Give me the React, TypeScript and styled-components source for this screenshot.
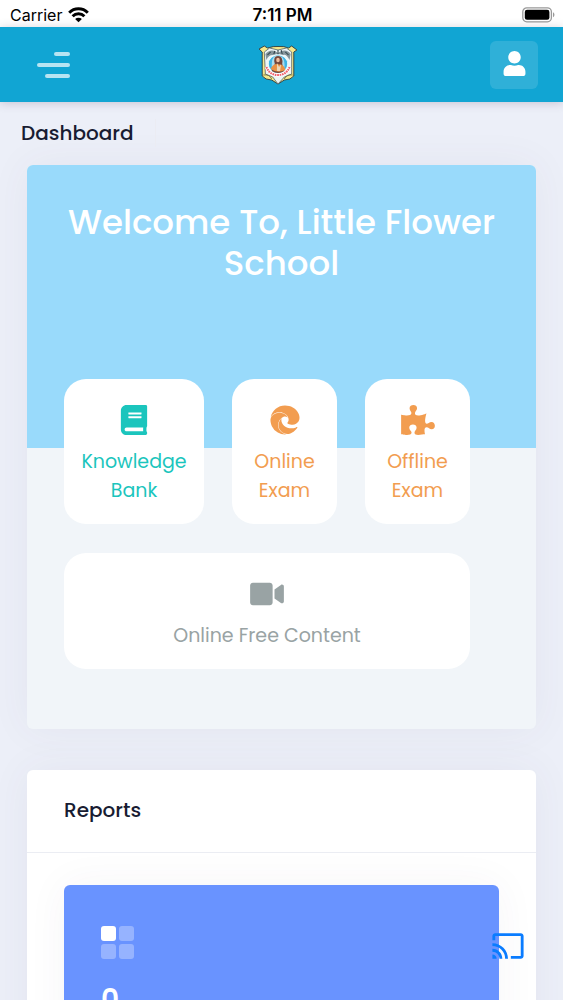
import React from "react";
import styled, { createGlobalStyle } from "styled-components";
import { FaBook, FaEdge, FaPuzzlePiece, FaUser, FaVideo } from "react-icons/fa";
import { MdCast } from "react-icons/md";

const GlobalStyle = createGlobalStyle`
  *, *::before, *::after { box-sizing: border-box; }
  body {
    margin: 0;
    background: #eceff8;
    color: #181c32;
    font-family: Poppins, Inter, "Liberation Sans", sans-serif;
  }
`;

const Screen = styled.div`
  display: flex;
  flex-direction: column;
  height: 100vh;
`;

const StatusBar = styled.div`
  display: grid;
  grid-template-columns: 1fr auto 1fr;
  align-items: center;
  flex: none;
  height: 27px;
  padding: 2px 8px 0 10px;
  background: #fff;
  color: #000;
  font-family: Inter, "Liberation Sans", sans-serif;
  font-size: 16px;
  line-height: 24px;
`;

const Carrier = styled.span`
  display: flex;
  align-items: center;
  gap: 6px;
`;

const Clock = styled.span`
  font-size: 17px;
  font-weight: 600;
`;

const BatterySlot = styled.span`
  display: flex;
  justify-content: flex-end;
`;

const TopBar = styled.header`
  display: flex;
  align-items: center;
  justify-content: space-between;
  flex: none;
  position: relative;
  z-index: 1;
  height: 75px;
  padding: 0 25px 0 37px;
  background: #11a5d3;
  box-shadow: 0 1px 9px rgba(82, 63, 105, 0.25);
`;

const TopSide = styled.div<{ $end?: boolean }>`
  display: flex;
  flex: 1;
  justify-content: ${(p) => (p.$end ? "flex-end" : "flex-start")};
`;

const MenuButton = styled.button`
  display: flex;
  flex-direction: column;
  align-items: flex-end;
  gap: 7px;
  width: 33px;
  padding: 0;
  border: 0;
  background: none;
`;

const MenuLine = styled.span<{ $width: number }>`
  width: ${(p) => p.$width}px;
  height: 4px;
  border-radius: 2px;
  background: #b7e4f2;
`;

const HomeLink = styled.a`
  display: flex;
  margin-right: 20px;
`;

const UserButton = styled.button`
  display: flex;
  align-items: center;
  justify-content: center;
  width: 48px;
  height: 48px;
  padding: 0 0 2px;
  border: 0;
  border-radius: 6px;
  background: rgba(255, 255, 255, 0.13);
  color: #fff;
  font-size: 25px;
`;

const Content = styled.main`
  flex: 1;
  min-height: 0;
  overflow-y: auto;
  scrollbar-width: none;
`;

const PageHead = styled.div`
  display: flex;
  align-items: center;
  gap: 21px;
  height: 63px;
  padding: 0 21px 2px;
`;

const PageTitle = styled.h1`
  margin: 0;
  font-size: 20px;
  font-weight: 500;
  line-height: 28px;
`;

const HeadRule = styled.span`
  width: 1px;
  height: 28px;
  background: #ebecf3;
`;

const Card = styled.section<{ $tone: string }>`
  margin: 0 27px 41px;
  border-radius: 6px;
  background: ${(p) => p.$tone};
  box-shadow: 0 0 42px rgba(82, 63, 105, 0.06);
`;

const Banner = styled.div`
  height: 283px;
  padding: 37px 36px 0;
  border-radius: 6px 6px 0 0;
  background: #99dafb;
`;

const Welcome = styled.h2`
  margin: 0;
  color: #fff;
  font-size: 34px;
  font-weight: 500;
  line-height: 41px;
  text-align: center;
`;

const Tiles = styled.nav`
  display: grid;
  grid-template-columns: 4fr 3fr 3fr;
  gap: 29px 28px;
  position: relative;
  margin: -69px 66px 0 37px;
  padding-bottom: 60px;
`;

const Tile = styled.a<{ $tone: string; $wide?: boolean }>`
  display: flex;
  flex-direction: column;
  align-items: center;
  grid-column: ${(p) => (p.$wide ? "1 / -1" : "auto")};
  gap: 12px;
  padding: 26px 12px 19px;
  border-radius: 22px;
  background: #fff;
  color: ${(p) => p.$tone};
  font-size: 19px;
  line-height: 29px;
  text-align: center;
  text-decoration: none;

  svg {
    width: 34px;
    height: 30px;
  }
`;

const CardHead = styled.header`
  padding: 26px 37px 28px;
  border-bottom: 1px solid #ebedf3;
`;

const CardTitle = styled.h2`
  margin: 0;
  font-size: 20px;
  font-weight: 500;
  line-height: 28px;
`;

const CardBody = styled.div`
  padding: 32px 37px 37px;
`;

const Stat = styled.div`
  padding: 41px 37px;
  border-radius: 6px;
  background: #6993ff;
  box-shadow: 0 0 42px rgba(82, 63, 105, 0.05);
  color: #fff;
`;

const StatIcon = styled.svg`
  display: block;
`;

const StatValue = styled.div`
  margin-top: 20px;
  font-size: 28px;
  font-weight: 600;
  line-height: 42px;
`;

const CastButton = styled.button`
  display: flex;
  position: fixed;
  right: 38px;
  bottom: 37px;
  padding: 0;
  border: 0;
  background: none;
  color: #0a7cff;
  font-size: 34px;
`;

const WifiMark = () => (
  <svg width="21" height="16" viewBox="0 0 21 16" aria-hidden="true">
    <g fill="none" stroke="#000" strokeWidth="3">
      <path d="M1.2 5.7a13.2 13.2 0 0 1 18.6 0" />
      <path d="M4.6 9.2a8.4 8.4 0 0 1 11.8 0" />
    </g>
    <path d="M10.5 15.3 7.1 12a4.9 4.9 0 0 1 6.8 0z" />
  </svg>
);

const BatteryMark = () => (
  <svg width="33" height="16" viewBox="0 0 33 16" aria-hidden="true">
    <rect x="0.8" y="0.8" width="28.6" height="14" rx="4" fill="none" stroke="#999" strokeWidth="1.3" />
    <rect x="2.8" y="2.8" width="24.6" height="10" rx="2.2" />
    <path d="M31 5.3c1.9.8 1.9 4.2 0 5z" fill="#999" />
  </svg>
);

const Crest = () => (
  <svg width="40" height="40" viewBox="0 0 38 40" preserveAspectRatio="none" role="img" aria-label="School crest">
    <path
      d="M1 4l5-3 3 2q6-2 10-1.500Q25 1 29 3l3-2 5 4-3 2v24q-3 4-9 4l-6 4-6-4q-6 0-9-4V7z"
      fill="#f5e88b"
      stroke="#343d3b"
      strokeWidth="0.900"
    />
    <path d="M6 7l5-4 8 2 8-2 5 4v22l-7 3-6 7-5-7-7-3z" fill="#eef6f6" stroke="#58676c" strokeWidth="0.800" />
    <path d="M7 9q4-5 9-3l3 2 3-2q6-2 9 3l-1 6q-3-6-6-5l-5-1-5 1q-4 0-6 5z" fill="#84959b" />
    <path d="M9 10l3-3m3 2 1-3m3 4V5m4 4-1-4m7 5-3-3" stroke="#2f4249" strokeWidth="1" />
    <circle cx="19" cy="19" r="9.300" fill="#3fb5e6" stroke="#e9fbff" strokeWidth="1" />
    <path d="M13 21q0-8 3-10l3-1 4 2q3 5 2 11l-3 4h-8z" fill="#a9dced" />
    <path d="M16 19q-2-8 3-8t4 8l2 7q-6 4-12 0z" fill="#74453a" />
    <ellipse cx="19" cy="15" rx="1.700" ry="2.300" fill="#f1bd9b" />
    <path d="M12 24q2-5 6-5l5 1q3 2 3 5-7 4-14-1z" fill="#e99145" />
    <path d="M18 18l2 4 2-3-1 7h-3z" fill="#eed6b5" />
    <path d="M8 22q3 8 11 8t11-8" fill="none" stroke="#fff" strokeWidth="3.500" />
    <path d="M8 22q3 8 11 8t11-8" fill="none" stroke="#f0606d" strokeWidth="2" strokeDasharray="1.600 0.700" />
    <path d="M5 30q6-1 8 4m20-4q-6-1-8 4" fill="none" stroke="#6b6937" strokeWidth="0.800" />
  </svg>
);

export default function App() {
  return (
    <Screen>
      <GlobalStyle />
      <StatusBar>
        <Carrier>
          Carrier
          <WifiMark />
        </Carrier>
        <Clock>7:11 PM</Clock>
        <BatterySlot>
          <BatteryMark />
        </BatterySlot>
      </StatusBar>

      <TopBar>
        <TopSide>
          <MenuButton aria-label="Menu">
            <MenuLine $width={16} />
            <MenuLine $width={33} />
            <MenuLine $width={25} />
          </MenuButton>
        </TopSide>
        <HomeLink href="#home">
          <Crest />
        </HomeLink>
        <TopSide $end>
          <UserButton aria-label="Profile">
            <FaUser />
          </UserButton>
        </TopSide>
      </TopBar>

      <Content>
        <PageHead>
          <PageTitle>Dashboard</PageTitle>
          <HeadRule />
        </PageHead>

        <Card $tone="#f1f5f9">
          <Banner>
            <Welcome>Welcome To, Little Flower School</Welcome>
          </Banner>
          <Tiles>
            <Tile href="#knowledge-bank" $tone="#1bc5bd">
              <FaBook />
              Knowledge Bank
            </Tile>
            <Tile href="#online-exam" $tone="#f29d50">
              <FaEdge />
              Online Exam
            </Tile>
            <Tile href="#offline-exam" $tone="#f29d50">
              <FaPuzzlePiece />
              Offline Exam
            </Tile>
            <Tile href="#free-content" $tone="#99a3a4" $wide>
              <FaVideo />
              Online Free Content
            </Tile>
          </Tiles>
        </Card>

        <Card $tone="#ffffff">
          <CardHead>
            <CardTitle>Reports</CardTitle>
          </CardHead>
          <CardBody>
            <Stat>
              <StatIcon width="33" height="33" viewBox="0 0 33 33" fill="#fff" aria-hidden="true">
                <rect width="15" height="15" rx="3" />
                <rect x="18" width="15" height="15" rx="3" opacity="0.3" />
                <rect y="18" width="15" height="15" rx="3" opacity="0.3" />
                <rect x="18" y="18" width="15" height="15" rx="3" opacity="0.3" />
              </StatIcon>
              <StatValue>0</StatValue>
            </Stat>
          </CardBody>
        </Card>
      </Content>

      <CastButton aria-label="Cast">
        <MdCast />
      </CastButton>
    </Screen>
  );
}
